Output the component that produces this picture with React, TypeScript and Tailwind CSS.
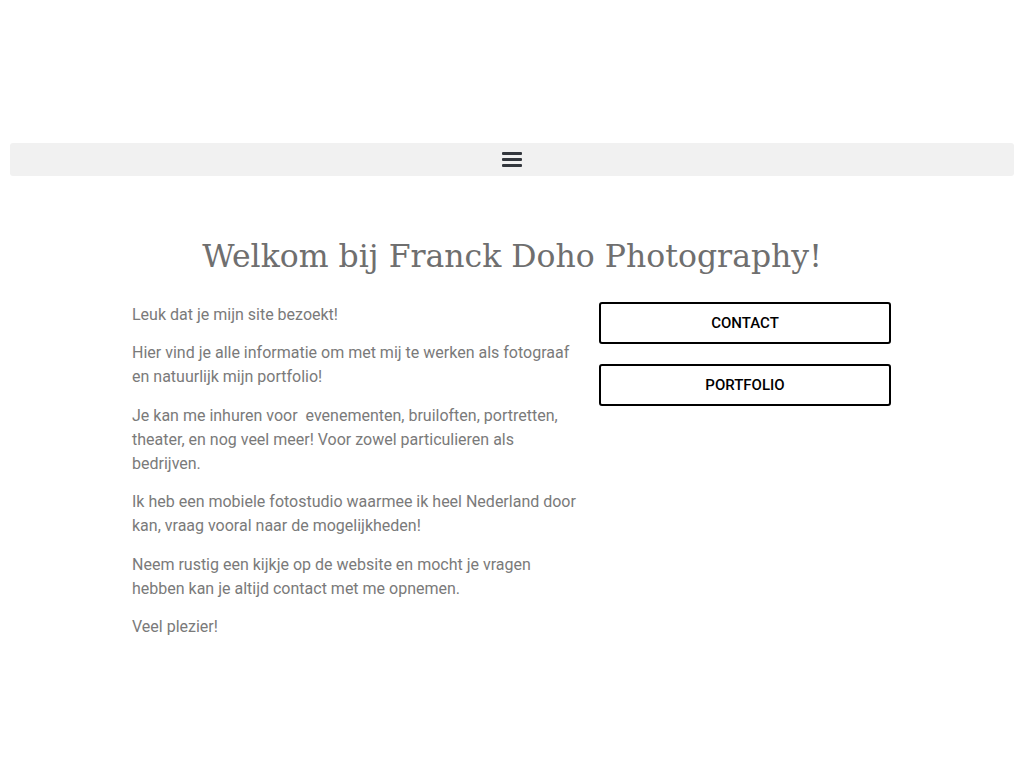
import React from "react";

export default function App() {
  const paras: React.ReactNode[] = [
    "Leuk dat je mijn site bezoekt!",
    "Hier vind je alle informatie om met mij te werken als fotograaf en natuurlijk mijn portfolio!",
    "Je kan me inhuren voor \u00a0evenementen, bruiloften, portretten, theater, en nog veel meer! Voor zowel particulieren als bedrijven.",
    "Ik heb een mobiele fotostudio waarmee ik heel Nederland door kan, vraag vooral naar de mogelijkheden!",
    "Neem rustig een kijkje op de website en mocht je vragen hebben kan je altijd contact met me opnemen.",
    "Veel plezier!",
  ];
  return (
    <div className="min-h-[768px] bg-white" style={{ fontFamily: "Roboto, sans-serif" }}>
      <div className="h-[143px]" />
      <div className="mx-[10px] h-[33px] bg-[#f1f1f1] rounded-[3px] flex items-center justify-center">
        <div className="flex flex-col gap-[3px] w-[20px]">
          <div className="h-[3px] bg-[#33373d] rounded-[1px]" />
          <div className="h-[3px] bg-[#33373d] rounded-[1px]" />
          <div className="h-[3px] bg-[#33373d] rounded-[1px]" />
        </div>
      </div>
      <div className="w-[780px] mx-auto pt-[57px]">
        <h1
          className="text-center text-[#6f6f6f] text-[31.5px] leading-[46px] mb-[24px]"
          style={{ fontFamily: '"DejaVu Serif", serif' }}
        >
          Welkom bij Franck Doho Photography!
        </h1>
        <div className="flex">
          <div className="w-[60%] px-[10px] text-[16px] leading-[24px] text-[#7a7a7a]">
            {paras.map((p, i) => (
              <p key={i} className="mb-[14.4px]">
                {p}
              </p>
            ))}
          </div>
          <div className="w-[40%] pl-[9px] pr-[11px] -mt-[1px] flex flex-col gap-[20px]">
            <a className="h-[42px] border-2 border-black rounded-[3px] flex items-center justify-center text-[15px] font-medium text-black uppercase">
              Contact
            </a>
            <a className="h-[42px] border-2 border-black rounded-[3px] flex items-center justify-center text-[15px] font-medium text-black uppercase">
              Portfolio
            </a>
          </div>
        </div>
      </div>
    </div>
  );
}
